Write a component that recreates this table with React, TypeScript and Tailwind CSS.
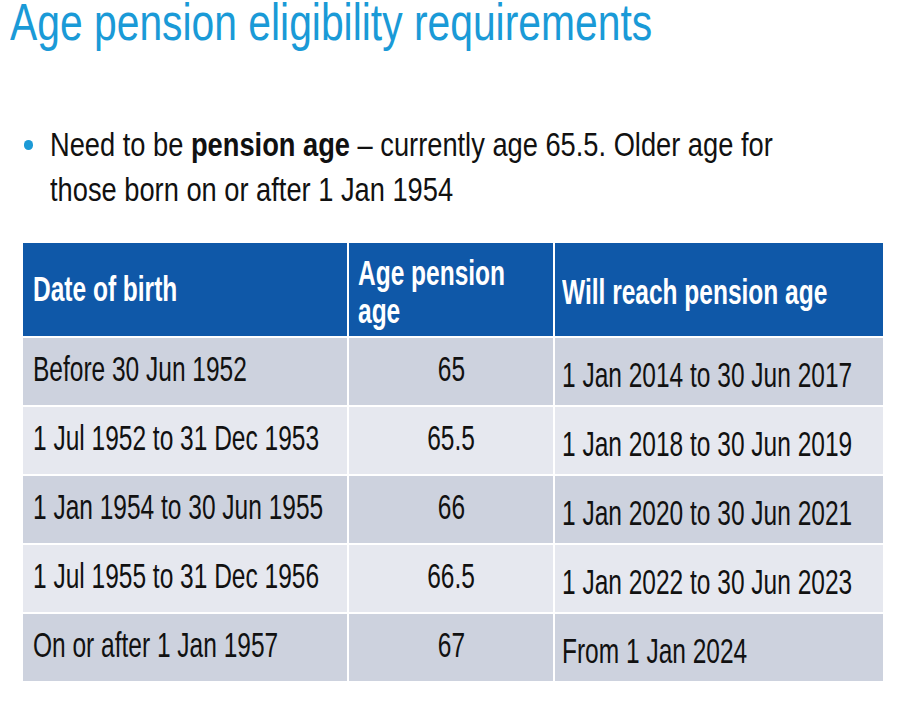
const rows = [
  ["Before 30 Jun 1952", "65", "1 Jan 2014 to 30 Jun 2017"],
  ["1 Jul 1952 to 31 Dec 1953", "65.5", "1 Jan 2018 to 30 Jun 2019"],
  ["1 Jan 1954 to 30 Jun 1955", "66", "1 Jan 2020 to 30 Jun 2021"],
  ["1 Jul 1955 to 31 Dec 1956", "66.5", "1 Jan 2022 to 30 Jun 2023"],
  ["On or after 1 Jan 1957", "67", "From 1 Jan 2024"],
]

export default function App() {
  return (
    <div className="w-[910px] h-[701px] overflow-hidden bg-white font-['Liberation_Sans',Arial,sans-serif] text-[#111]">
      {/* title */}
      <h1 className="pl-[10px] h-[44px] text-[52px] leading-[44px] text-[#1a9ad7] whitespace-nowrap">
        <span className="inline-block origin-left scale-x-[0.785]">Age pension eligibility requirements</span>
      </h1>

      {/* bullet */}
      <div className="mt-[78px] flex">
        <div className="w-[50px] shrink-0 flex justify-center pl-[6px]">
          <span className="mt-[18px] w-[9px] h-[10px] rounded-full bg-[#1c9ad6]" />
        </div>
        <p className="text-[33px] leading-[45px] whitespace-nowrap">
          <span className="inline-block origin-left scale-x-[0.826]">
            Need to be <b>pension age</b> – currently age 65.5. Older age for
            <br />
            those born on or after 1 Jan 1954
          </span>
        </p>
      </div>

      {/* table */}
      <div className="mt-[31px] ml-[23px] w-[860px] grid grid-cols-[324px_204px_328px] gap-[2px] bg-white">
        <div className="h-[93px] bg-[#0f58a8] flex items-center pl-[10px] text-white font-bold text-[35px] whitespace-nowrap">
          <span className="inline-block origin-left scale-x-70">Date of birth</span>
        </div>
        <div className="h-[93px] bg-[#0f58a8] flex items-center pl-[9px] pt-[4px] text-white font-bold text-[35px] leading-[38px] whitespace-nowrap">
          <span className="inline-block origin-left scale-x-70">
            Age pension
            <br />
            age
          </span>
        </div>
        <div className="h-[93px] bg-[#0f58a8] flex items-center pl-[7px] pt-[6px] text-white font-bold text-[35px] whitespace-nowrap">
          <span className="inline-block origin-left scale-x-70">Will reach pension age</span>
        </div>

        {rows.map((r, i) => {
          const bg = i % 2 === 0 ? "bg-[#cdd2de]" : "bg-[#e6e8ef]"
          return [
            <div key={i + "a"} className={`${bg} h-[67px] flex items-center pl-[10px] pb-[6px] text-[35px] leading-[40px] whitespace-nowrap`}>
              <span className="inline-block origin-left scale-x-70">{r[0]}</span>
            </div>,
            <div key={i + "b"} className={`${bg} h-[67px] flex items-center justify-center pb-[6px] text-[35px] leading-[40px] whitespace-nowrap`}>
              <span className="inline-block origin-center scale-x-70">{r[1]}</span>
            </div>,
            <div key={i + "c"} className={`${bg} h-[67px] flex items-center pl-[7px] pt-[6px] text-[35px] leading-[40px] whitespace-nowrap`}>
              <span className="inline-block origin-left scale-x-70">{r[2]}</span>
            </div>,
          ]
        })}
      </div>
    </div>
  )
}
